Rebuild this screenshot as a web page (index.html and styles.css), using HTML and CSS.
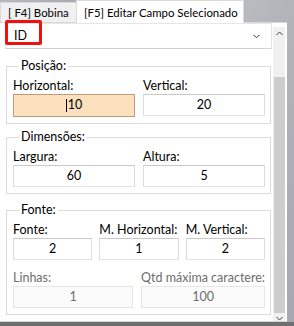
FILE: index.html
```html
<!DOCTYPE html>
<html lang="pt">
<head>
  <meta charset="UTF-8" />
  <title>Editar Campo Selecionado</title>
  <link rel="stylesheet" href="styles.css">
</head>
<body>
  <div class="window">
    <div class="tabs">
      <div class="tab">[ F4] Bobina</div>
      <div class="tab active">[F5] Editar Campo Selecionado</div>
    </div>
    <div class="panel">
      <div class="content">
        <div class="combo">
          <span class="combo-value">ID</span>
          <svg class="chev" width="7" height="5" viewBox="0 0 7 5"><polyline points="0.5,0.8 3.5,3.8 6.5,0.8" fill="none" stroke="#333" stroke-width="1"/></svg>
          <span class="mark"></span>
        </div>

        <fieldset class="group">
          <legend>Posição:</legend>
          <div class="row cols-2">
            <div class="field">
              <label>Horizontal:</label>
              <div class="input focus"><span class="caret"></span>10</div>
            </div>
            <div class="field">
              <label>Vertical:</label>
              <div class="input">20</div>
            </div>
          </div>
        </fieldset>

        <fieldset class="group">
          <legend>Dimensões:</legend>
          <div class="row cols-2">
            <div class="field">
              <label>Largura:</label>
              <div class="input">60</div>
            </div>
            <div class="field">
              <label>Altura:</label>
              <div class="input">5</div>
            </div>
          </div>
        </fieldset>

        <fieldset class="group font-group">
          <legend>Fonte:</legend>
          <div class="row cols-3">
            <div class="field">
              <label>Fonte:</label>
              <div class="input">2</div>
            </div>
            <div class="field">
              <label>M. Horizontal:</label>
              <div class="input">1</div>
            </div>
            <div class="field">
              <label>M. Vertical:</label>
              <div class="input">2</div>
            </div>
          </div>
          <div class="row cols-2 second">
            <div class="field disabled">
              <label>Linhas:</label>
              <div class="input">1</div>
            </div>
            <div class="field disabled">
              <label>Qtd máxima caractere:</label>
              <div class="input">100</div>
            </div>
          </div>
        </fieldset>
      </div>

      <div class="scrollbar">
        <div class="arrow up">
          <svg width="7" height="5" viewBox="0 0 7 5"><polyline points="0.5,4 3.5,1 6.5,4" fill="none" stroke="#404040" stroke-width="1"/></svg>
        </div>
        <div class="track"></div>
        <div class="thumb"></div>
        <div class="arrow down">
          <svg width="7" height="5" viewBox="0 0 7 5"><polyline points="0.5,1 3.5,4 6.5,1" fill="none" stroke="#404040" stroke-width="1"/></svg>
        </div>
      </div>
    </div>
  </div>
  <div class="bottom-bar"></div>
</body>
</html>
```

FILE: styles.css
```css
* { box-sizing: border-box; }
body {
  margin: 0;
  width: 294px;
  height: 326px;
  overflow: hidden;
  font-family: 'Lato', 'Noto Sans', sans-serif;
  font-size: 12.5px;
  color: #000;
  background: linear-gradient(105deg, #b8b8bf 0%, #9e9ea7 35%, #b9b9c0 65%, #a7a7af 100%);
}
.window { width: 287px; }
.tabs {
  display: flex;
  align-items: flex-end;
  height: 22px;
  font-size: 11.4px;
}
.tab {
  height: 20px;
  width: 76px;
  padding-left: 7px;
  line-height: 19px;
  white-space: nowrap;
  background: #f0f0f0;
  border: 1px solid #d9d9d9;
  border-bottom: none;
  border-right: none;
}
.tab.active {
  position: relative;
  width: 168px;
  height: 23px;
  margin-bottom: -1px;
  line-height: 23px;
  background: #fff;
  border-right: 1px solid #d9d9d9;
}
.panel {
  display: flex;
  height: 300px;
  background: #fff;
  border-top: 1px solid #d9d9d9;
  border-bottom: 1px solid #d4d4d4;
}
.content { width: 273px; }

.combo {
  position: relative;
  display: flex;
  align-items: center;
  justify-content: space-between;
  height: 26px;
  margin: 0 1px 0 5px;
  padding: 0 11px 0 8px;
  border: 1px solid #e6e6e6;
  border-bottom-color: #d2d2d2;
}
.combo-value { line-height: 16px; }
.chev { display: block; }
.mark {
  position: absolute;
  left: -1px;
  top: -4px;
  width: 37px;
  height: 25px;
  border: 3px solid #f01010;
  border-radius: 2px;
}

.group {
  margin: 6px 2px 0 6px;
  padding: 0 5px 6px 6px;
  border: 1px solid #dcdcdc;
  min-width: 0;
}
.group:first-of-type { margin-top: 10px; }
.font-group { margin-top: 9px; }
.group legend {
  margin-left: 6px;
  padding: 0 2px;
  line-height: 14px;
}
.row {
  display: grid;
  gap: 8px;
  margin-top: 5px;
}
.cols-2 { grid-template-columns: 1fr 1fr; }
.cols-3 { grid-template-columns: 1fr 1fr 1fr; gap: 7px; }
.row.second { margin-top: 10px; }
.field label {
  display: block;
  line-height: 16px;
  white-space: nowrap;
}
.input {
  height: 22px;
  line-height: 20px;
  text-align: center;
  background: #fff;
  border: 1px solid;
  border-color: #c9c9c9 #dcdcdc #e4e4e4;
}
.input.focus {
  height: 23px;
  background: #fae0bd;
  border-color: #c49a7b;
}
.caret {
  display: inline-block;
  width: 1px;
  height: 13px;
  margin-right: 1px;
  vertical-align: -3px;
  background: #000;
}
.disabled label { color: #6d6d6d; }
.disabled .input {
  color: #6d6d6d;
  background: #fbfbfb;
  border-color: #e6e6e6;
}

.scrollbar {
  display: flex;
  flex-direction: column;
  width: 12px;
  height: 294px;
  margin-top: 4px;
  background: #f0f0f0;
}
.arrow {
  display: flex;
  justify-content: center;
  height: 14px;
  padding-top: 4px;
}
.arrow.down { height: 8px; padding-top: 3px; }
.track { height: 36px; }
.thumb {
  height: 236px;
  margin: 0 0 0 1px;
  background: #cdcdcd;
}
.bottom-bar {
  height: 4px;
  background: #6f6f6f;
}
```
